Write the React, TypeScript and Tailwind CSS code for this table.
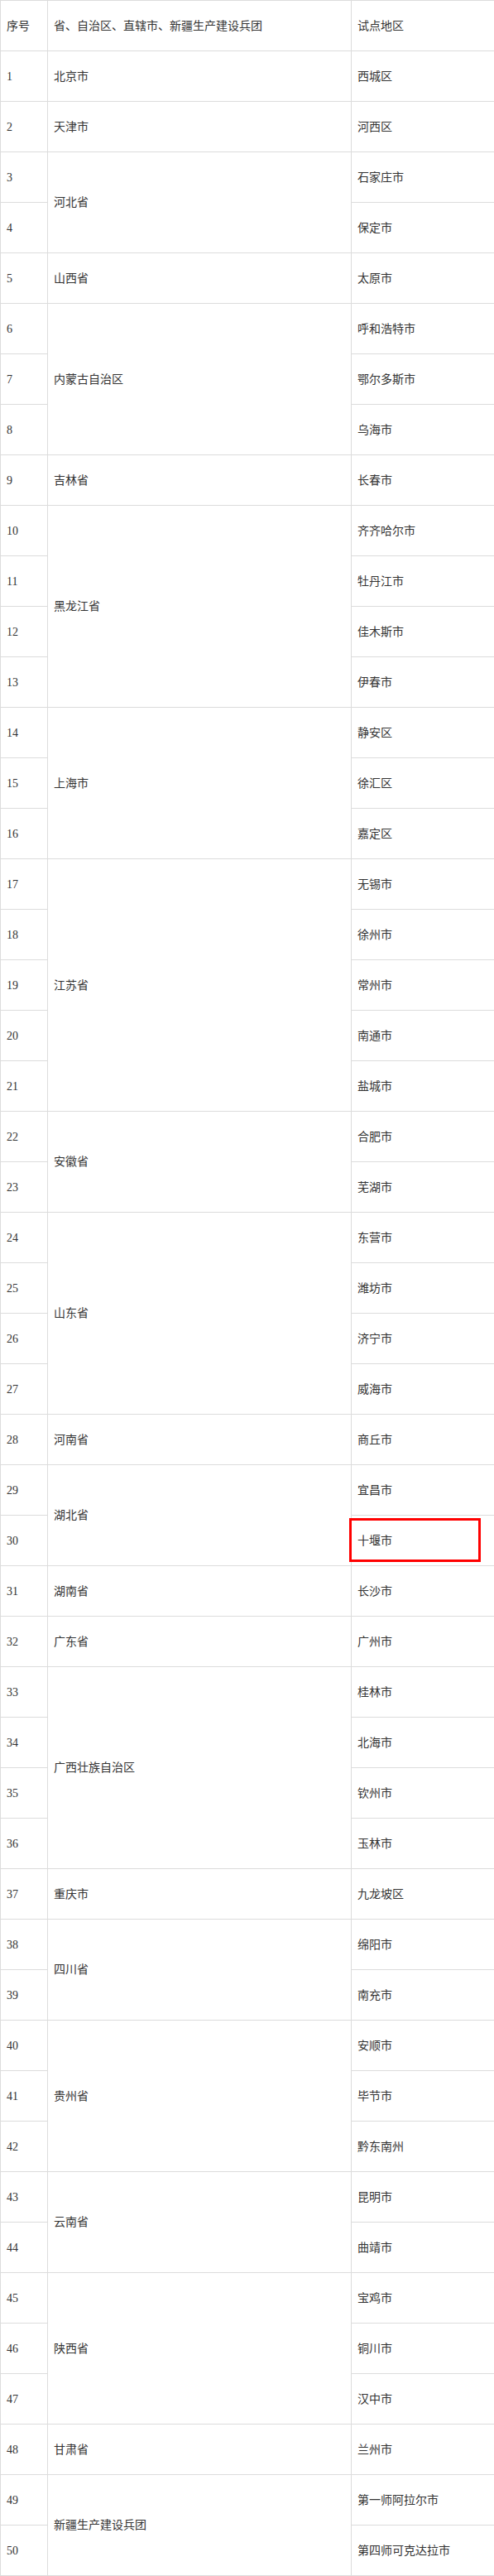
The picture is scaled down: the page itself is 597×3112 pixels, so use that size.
const groups: { province: string; cities: string[] }[] = [
  { province: '北京市', cities: ['西城区'] },
  { province: '天津市', cities: ['河西区'] },
  { province: '河北省', cities: ['石家庄市', '保定市'] },
  { province: '山西省', cities: ['太原市'] },
  { province: '内蒙古自治区', cities: ['呼和浩特市', '鄂尔多斯市', '乌海市'] },
  { province: '吉林省', cities: ['长春市'] },
  { province: '黑龙江省', cities: ['齐齐哈尔市', '牡丹江市', '佳木斯市', '伊春市'] },
  { province: '上海市', cities: ['静安区', '徐汇区', '嘉定区'] },
  { province: '江苏省', cities: ['无锡市', '徐州市', '常州市', '南通市', '盐城市'] },
  { province: '安徽省', cities: ['合肥市', '芜湖市'] },
  { province: '山东省', cities: ['东营市', '潍坊市', '济宁市', '威海市'] },
  { province: '河南省', cities: ['商丘市'] },
  { province: '湖北省', cities: ['宜昌市', '十堰市'] },
  { province: '湖南省', cities: ['长沙市'] },
  { province: '广东省', cities: ['广州市'] },
  { province: '广西壮族自治区', cities: ['桂林市', '北海市', '钦州市', '玉林市'] },
  { province: '重庆市', cities: ['九龙坡区'] },
  { province: '四川省', cities: ['绵阳市', '南充市'] },
  { province: '贵州省', cities: ['安顺市', '毕节市', '黔东南州'] },
  { province: '云南省', cities: ['昆明市', '曲靖市'] },
  { province: '陕西省', cities: ['宝鸡市', '铜川市', '汉中市'] },
  { province: '甘肃省', cities: ['兰州市'] },
  { province: '新疆生产建设兵团', cities: ['第一师阿拉尔市', '第四师可克达拉市'] },
];

const cell = 'border border-[#dcdcdc] px-[7px] align-middle text-left font-normal';

export default function App() {
  let n = 0;
  const rows = groups.flatMap((g) =>
    g.cities.map((city, i) => {
      n += 1;
      return (
        <tr key={n} className="h-[61px]">
          <td className={cell}>{n}</td>
          {i === 0 && (
            <td className={cell} rowSpan={g.cities.length}>
              {g.province}
            </td>
          )}
          <td className={cell}>{city}</td>
        </tr>
      );
    })
  );

  return (
    <div className="relative w-[597px] overflow-hidden bg-white text-[14px] text-[#333] font-['Liberation_Serif','Noto_Sans_CJK_SC',serif]">
      <table className="w-[640px] table-fixed border-collapse">
        <colgroup>
          <col className="w-[57px]" />
          <col className="w-[367px]" />
          <col />
        </colgroup>
        <thead>
          <tr className="h-[61px]">
            <th className={cell}>序号</th>
            <th className={cell}>省、自治区、直辖市、新疆生产建设兵团</th>
            <th className={cell}>试点地区</th>
          </tr>
        </thead>
        <tbody>{rows}</tbody>
      </table>

      {/* red highlight around 十堰市 */}
      <div className="absolute left-[422px] top-[1834px] h-[53px] w-[159px] border-[3px] border-[#ff0000]" />
    </div>
  );
}
